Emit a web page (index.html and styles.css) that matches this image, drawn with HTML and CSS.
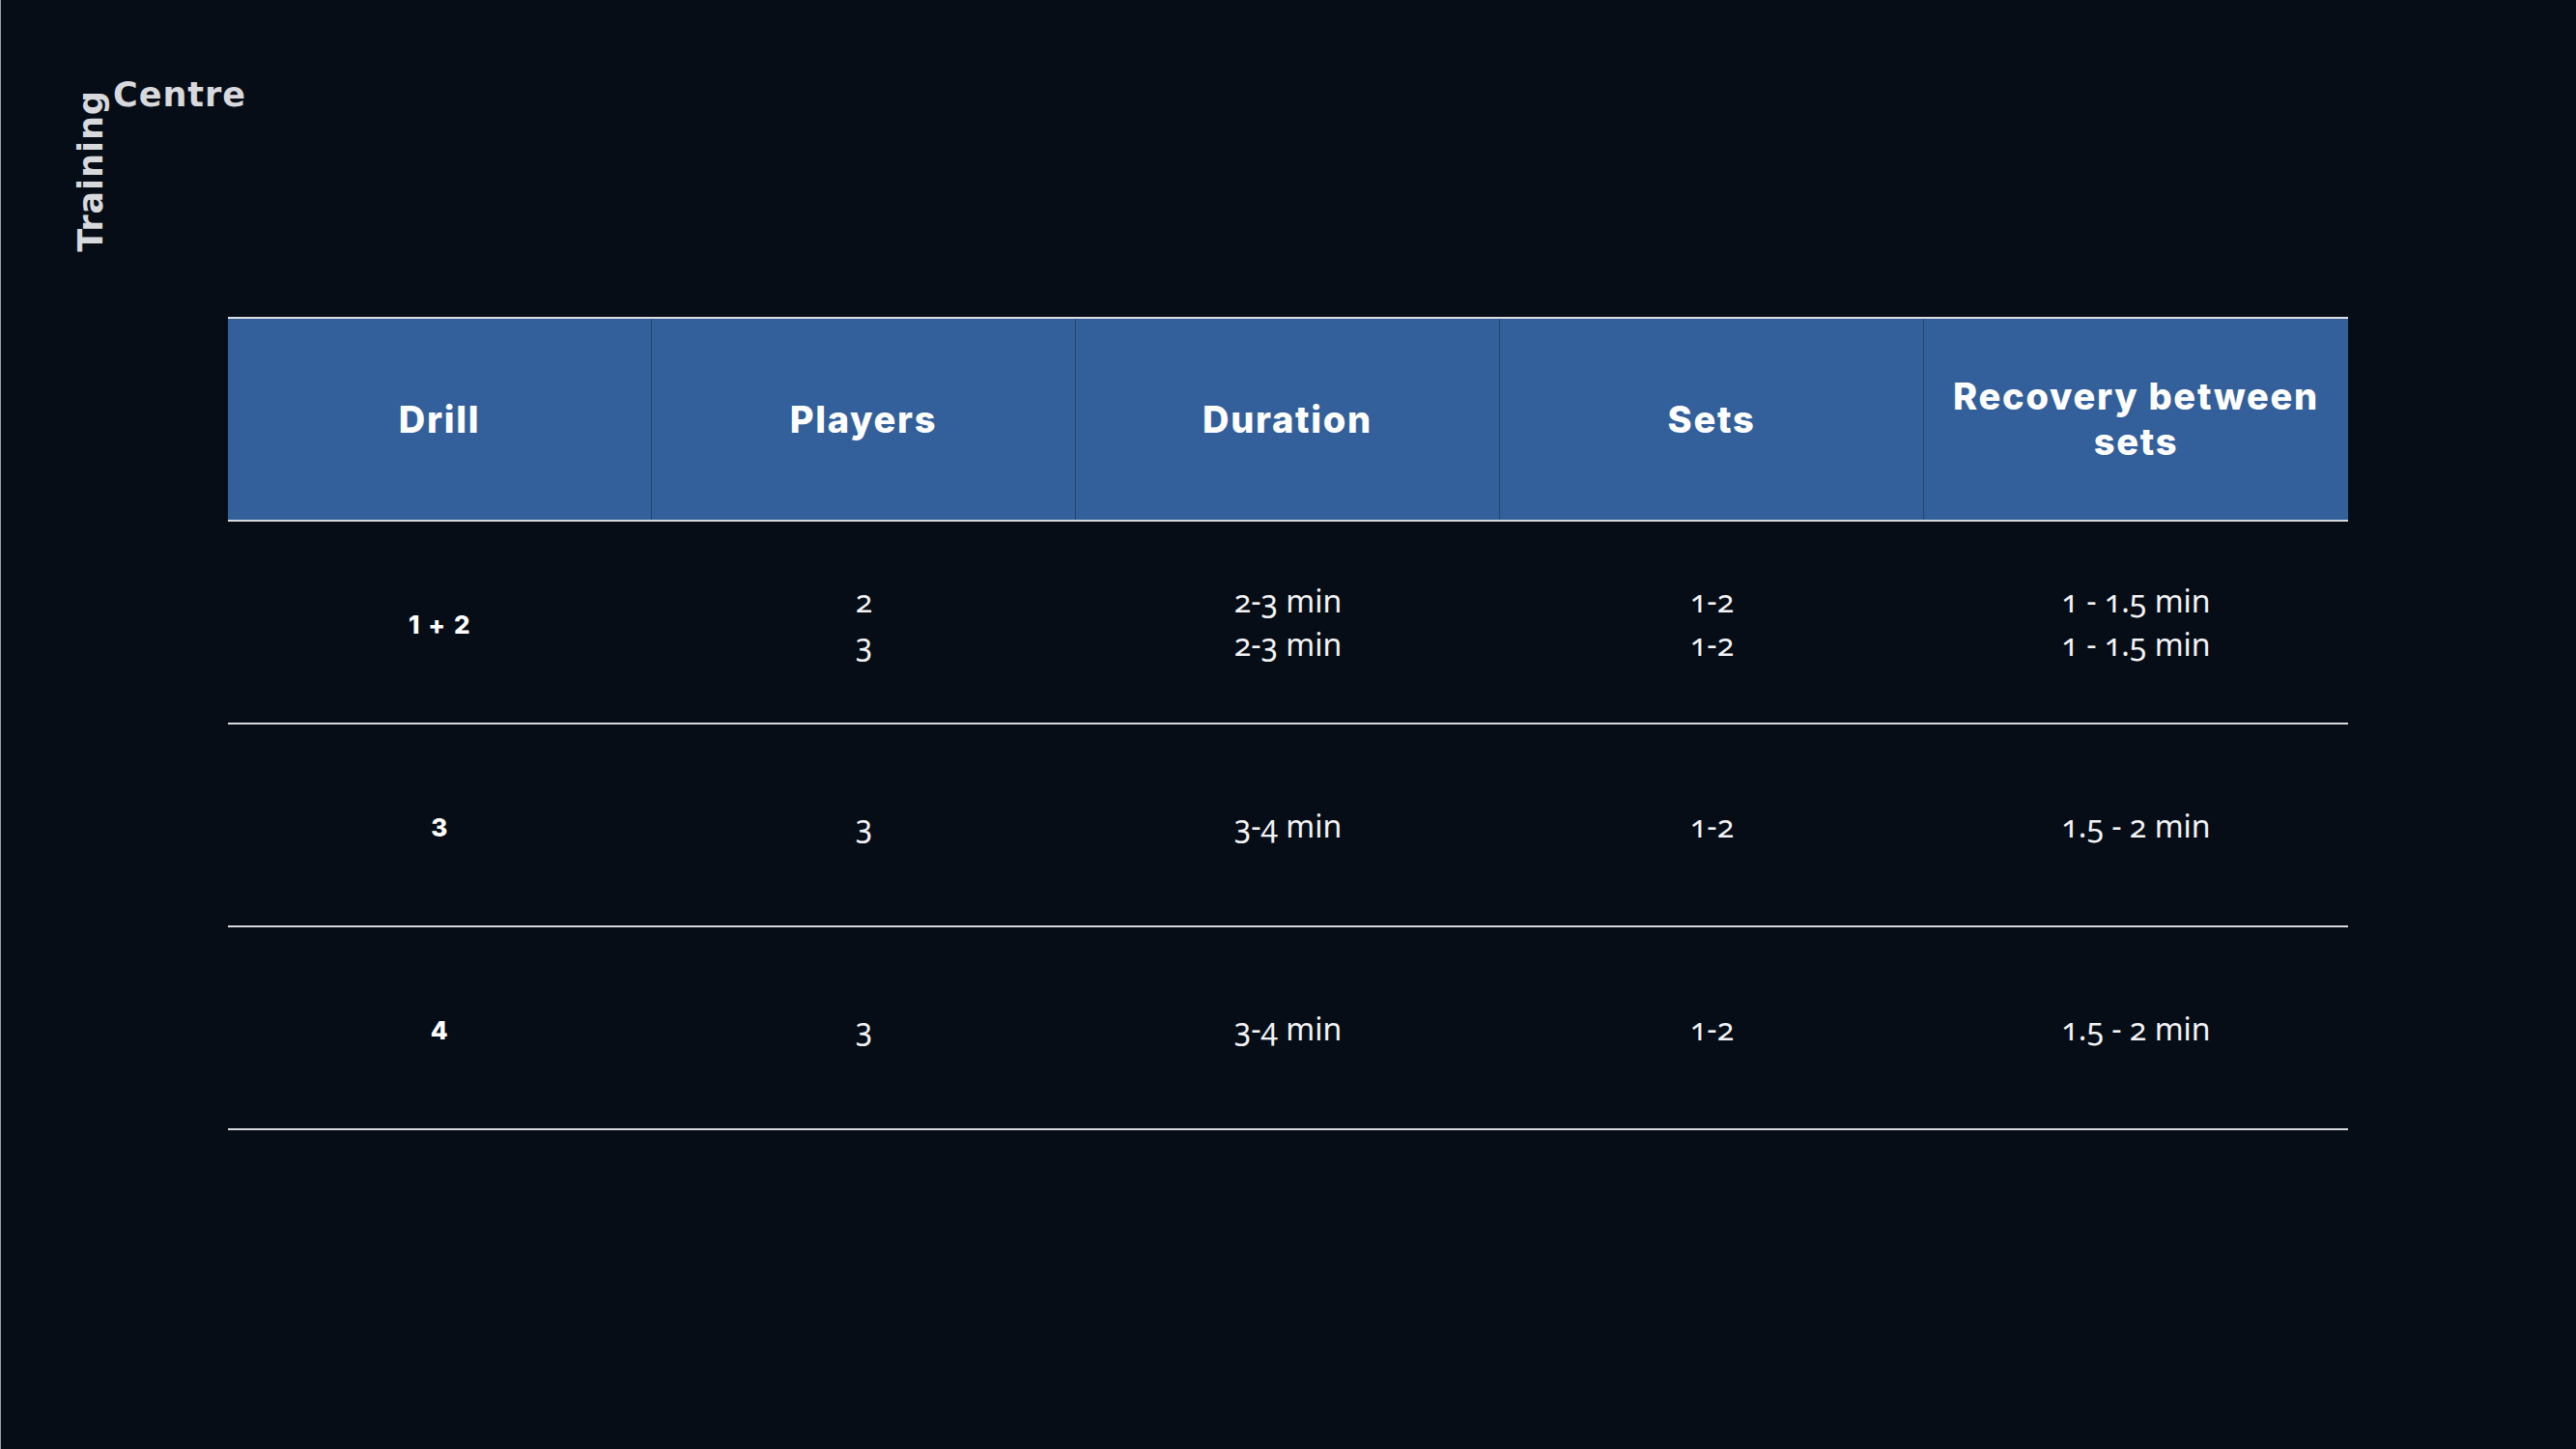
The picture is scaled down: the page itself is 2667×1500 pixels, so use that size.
FILE: index.html
```html
<!DOCTYPE html>
<html lang="en">
<head>
<meta charset="utf-8">
<title>Training Centre</title>
<link rel="stylesheet" href="styles.css">
</head>
<body>
<div class="page">
  <header class="brand">
    <span class="brand-vertical">Training</span>
    <span class="brand-horizontal">Centre</span>
  </header>

  <div class="table">
    <div class="row head">
      <div class="cell">Drill</div>
      <div class="cell">Players</div>
      <div class="cell">Duration</div>
      <div class="cell">Sets</div>
      <div class="cell">Recovery between sets</div>
    </div>
    <div class="row">
      <div class="cell drill">1 + 2</div>
      <div class="cell"><span>2</span><span>3</span></div>
      <div class="cell"><span>2-3 min</span><span>2-3 min</span></div>
      <div class="cell"><span>1-2</span><span>1-2</span></div>
      <div class="cell"><span>1 - 1.5 min</span><span>1 - 1.5 min</span></div>
    </div>
    <div class="row">
      <div class="cell drill">3</div>
      <div class="cell"><span>3</span></div>
      <div class="cell"><span>3-4 min</span></div>
      <div class="cell"><span>1-2</span></div>
      <div class="cell"><span>1.5 - 2 min</span></div>
    </div>
    <div class="row">
      <div class="cell drill">4</div>
      <div class="cell"><span>3</span></div>
      <div class="cell"><span>3-4 min</span></div>
      <div class="cell"><span>1-2</span></div>
      <div class="cell"><span>1.5 - 2 min</span></div>
    </div>
  </div>
</div>
</body>
</html>
```

FILE: styles.css
```css
html, body {
  margin: 0;
  padding: 0;
}

body {
  background: #070d17;
  border-left: 1px solid #9a9ea5;
  min-height: 1500px;
  box-sizing: border-box;
  color: #f2f3f5;
  font-family: "Noto Sans", "Open Sans", sans-serif;
}

.page {
  padding-top: 81px;
}

.brand {
  display: flex;
  align-items: flex-start;
  gap: 5px;
  height: 247px;
  box-sizing: border-box;
  padding-left: 76px;
  color: #d7d9dc;
  font-family: "DejaVu Sans", "Inter", sans-serif;
  font-weight: 700;
  font-size: 35px;
  letter-spacing: 1px;
  line-height: 1;
}

.brand-vertical {
  writing-mode: vertical-rl;
  transform: rotate(180deg);
  margin-top: 12px;
  width: 35px;
}

.brand-horizontal {
  display: block;
}

.table {
  width: 2195px;
  margin-left: 235px;
  border-top: 2px solid #dcdde0;
}

.row {
  display: grid;
  grid-template-columns: repeat(5, 1fr);
  height: 210px;
  box-sizing: border-box;
  border-bottom: 2px solid #d6d8db;
}

.cell {
  display: flex;
  flex-direction: column;
  align-items: center;
  justify-content: center;
  text-align: center;
  padding: 0 20px;
  font-size: 32px;
  line-height: 45px;
  font-variant-numeric: oldstyle-nums;
}

.head {
  background: #33609a;
}

.head .cell {
  font-family: "Inter", "DejaVu Sans", sans-serif;
  font-weight: 800;
  font-size: 38px;
  letter-spacing: 0.045em;
  line-height: 47px;
  color: #ffffff;
  border-right: 1px solid #25446e;
  font-variant-numeric: normal;
}

.head .cell:last-child {
  border-right: none;
}

.cell.drill {
  font-family: "Inter", "DejaVu Sans", sans-serif;
  font-weight: 800;
  font-size: 26px;
  letter-spacing: 0.06em;
  padding-top: 4px;
  color: #ffffff;
  font-variant-numeric: normal;
}
```
